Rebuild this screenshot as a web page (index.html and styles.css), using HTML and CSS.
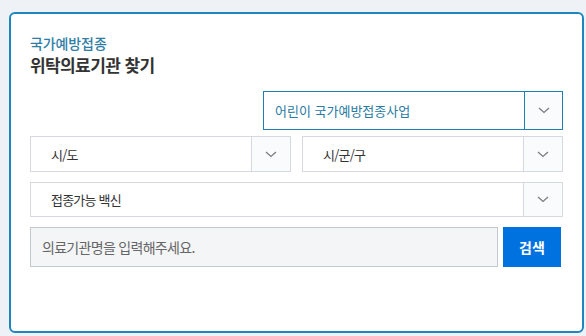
FILE: index.html
```html
<!DOCTYPE html>
<html lang="ko">
<head>
    <meta charset="UTF-8">
    <meta name="viewport" content="width=device-width, initial-scale=1.0">
    <title>위탁의료기관 찾기</title>
    <link rel="stylesheet" href="styles.css">
</head>
<body>
    <div class="finder">
        <div class="finder-head">
            <span class="finder-sub">국가예방접종</span>
            <span class="finder-title">위탁의료기관 찾기</span>
        </div>

        <div class="row row-right">
            <div class="select select-main">
                <span class="select-text">어린이 국가예방접종사업</span>
                <span class="select-arrow">
                    <svg width="12" height="7" viewBox="0 0 12 7"><path d="M1 1l5 4.5L11 1" fill="none" stroke="#7a7d82" stroke-width="1.3"/></svg>
                </span>
            </div>
        </div>

        <div class="row row-half">
            <div class="select">
                <span class="select-text">시/도</span>
                <span class="select-arrow">
                    <svg width="12" height="7" viewBox="0 0 12 7"><path d="M1 1l5 4.5L11 1" fill="none" stroke="#7a7d82" stroke-width="1.3"/></svg>
                </span>
            </div>
            <div class="select">
                <span class="select-text">시/군/구</span>
                <span class="select-arrow">
                    <svg width="12" height="7" viewBox="0 0 12 7"><path d="M1 1l5 4.5L11 1" fill="none" stroke="#7a7d82" stroke-width="1.3"/></svg>
                </span>
            </div>
        </div>

        <div class="row">
            <div class="select select-wide">
                <span class="select-text">접종가능 백신</span>
                <span class="select-arrow">
                    <svg width="12" height="7" viewBox="0 0 12 7"><path d="M1 1l5 4.5L11 1" fill="none" stroke="#7a7d82" stroke-width="1.3"/></svg>
                </span>
            </div>
        </div>

        <div class="row row-search">
            <input type="text" class="search-input" placeholder="의료기관명을 입력해주세요.">
            <button class="search-btn">검색</button>
        </div>
    </div>
</body>
</html>
```

FILE: styles.css
```css
body {
    margin: 0;
    padding: 12px 2px 0 9px;
    background-color: #eef1f5;
    font-family: "Noto Sans CJK KR", "Noto Sans", sans-serif;
}

/* 카드 */
.finder {
    box-sizing: border-box;
    width: 575px;
    height: 321px;
    padding: 20px 19px 0 19px;
    background-color: #fff;
    border: 2px solid #1e86bf;
    border-radius: 6px;
}

.finder-head {
    display: flex;
    flex-direction: column;
    margin-bottom: 15px;
}

.finder-sub {
    font-size: 14px;
    line-height: 19px;
    font-weight: 500;
    color: #2f7ea6;
    letter-spacing: -0.1px;
}

.finder-title {
    font-size: 17px;
    line-height: 23px;
    font-weight: 700;
    color: #333;
    letter-spacing: -0.6px;
}

.row {
    display: flex;
    margin-bottom: 10px;
}

.row-right {
    justify-content: flex-end;
    margin-bottom: 6px;
}

.row-half {
    gap: 11px;
}

/* 셀렉트 박스 */
.select {
    box-sizing: border-box;
    display: flex;
    flex: 1;
    height: 36px;
    border: 1px solid #d5d8de;
    background-color: #fff;
}

.select-text {
    flex: 1;
    display: flex;
    align-items: center;
    padding-left: 20px;
    font-size: 13px;
    color: #333;
    letter-spacing: -0.8px;
}

.select-arrow {
    width: 38px;
    display: flex;
    align-items: center;
    justify-content: center;
    border-left: 1px solid #d5d8de;
    background-color: #fafbfd;
}

.select-main {
    flex: none;
    width: 300px;
    height: 39px;
    border-color: #1e7fb2;
}

.select-main .select-text {
    padding-left: 11px;
    color: #2a7aa3;
    font-size: 13px;
    letter-spacing: 0;
}

.select-main .select-arrow {
    width: 37px;
    border-left-color: #1e7fb2;
}

.select-wide {
    height: 35px;
}

/* 검색 */
.row-search {
    gap: 5px;
}

.search-input {
    box-sizing: border-box;
    width: 468px;
    height: 40px;
    padding: 0 11px;
    border: 1px solid #c4c7cc;
    background-color: #f4f5f7;
    font-family: inherit;
    font-size: 14px;
    letter-spacing: -0.7px;
    outline: none;
}

.search-input::placeholder {
    color: #666;
}

.search-btn {
    width: 58px;
    height: 40px;
    border: none;
    background-color: #0072e0;
    color: #fff;
    font-family: inherit;
    font-size: 14px;
    font-weight: 700;
    cursor: pointer;
}
```
